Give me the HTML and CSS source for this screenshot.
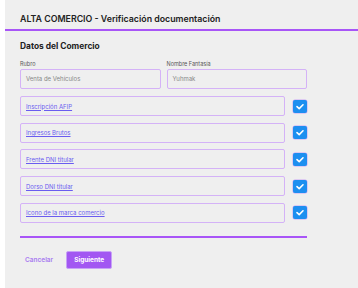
FILE: index.html
```html
<!DOCTYPE html>
<html lang="es">
<head>
<meta charset="utf-8">
<link rel="stylesheet" href="styles.css">
</head>
<body>
<div class="panel">
  <div class="header">
    <h1 class="title">ALTA COMERCIO - Verificación documentación</h1>
  </div>
  <div class="content">
    <h2 class="section">Datos del Comercio</h2>
    <div class="fields">
      <div class="field">
        <label class="label">Rubro</label>
        <div class="input">Venta de Vehículos</div>
      </div>
      <div class="field">
        <label class="label">Nombre Fantasía</label>
        <div class="input">Yuhmak</div>
      </div>
    </div>
    <div class="docs">
      <div class="doc"><div class="doc-box"><a class="doc-link" href="#">Inscripción AFIP</a></div><span class="check"><svg viewBox="0 0 14 13" width="14" height="13"><path d="M4 6.6 L6.2 8.6 L10 4.8" fill="none" stroke="#fff" stroke-width="1.6" stroke-linecap="round" stroke-linejoin="round"/></svg></span></div>
      <div class="doc"><div class="doc-box"><a class="doc-link" href="#">Ingresos Brutos</a></div><span class="check"><svg viewBox="0 0 14 13" width="14" height="13"><path d="M4 6.6 L6.2 8.6 L10 4.8" fill="none" stroke="#fff" stroke-width="1.6" stroke-linecap="round" stroke-linejoin="round"/></svg></span></div>
      <div class="doc"><div class="doc-box"><a class="doc-link" href="#">Frente DNI titular</a></div><span class="check"><svg viewBox="0 0 14 13" width="14" height="13"><path d="M4 6.6 L6.2 8.6 L10 4.8" fill="none" stroke="#fff" stroke-width="1.6" stroke-linecap="round" stroke-linejoin="round"/></svg></span></div>
      <div class="doc"><div class="doc-box"><a class="doc-link" href="#">Dorso DNI titular</a></div><span class="check"><svg viewBox="0 0 14 13" width="14" height="13"><path d="M4 6.6 L6.2 8.6 L10 4.8" fill="none" stroke="#fff" stroke-width="1.6" stroke-linecap="round" stroke-linejoin="round"/></svg></span></div>
      <div class="doc"><div class="doc-box"><a class="doc-link" href="#">Icono de la marca comercio</a></div><span class="check"><svg viewBox="0 0 14 13" width="14" height="13"><path d="M4 6.6 L6.2 8.6 L10 4.8" fill="none" stroke="#fff" stroke-width="1.6" stroke-linecap="round" stroke-linejoin="round"/></svg></span></div>
    </div>
    <div class="divider"></div>
    <div class="actions">
      <button class="btn-cancel">Cancelar</button>
      <button class="btn-next">Siguiente</button>
    </div>
  </div>
</div>
</body>
</html>
```
FILE: styles.css
```css
* { box-sizing: border-box; }
html, body { margin: 0; padding: 0; background: #ffffff; }
body { font-family: Inter, "Liberation Sans", sans-serif; color: #1f1f1f; }
.panel {
  margin-left: 5px;
  height: 288px;
  background: #efefef;
  overflow: hidden;
}
.header {
  padding: 12px 0 0 15px;
  border-bottom: 2px solid #a855f7;
  height: 31px;
}
.title {
  margin: 0;
  font-size: 8.8px;
  line-height: 13px;
  font-weight: 600;
  color: #222;
}
.content {
  padding: 0 0 0 15px;
  width: 302px;
}
.section {
  margin: 9px 0 0 0;
  font-size: 8.4px;
  line-height: 12px;
  font-weight: 700;
  color: #222;
}
.fields {
  display: flex;
  gap: 6px;
  margin-top: 8px;
}
.field { flex: 1; display: flex; flex-direction: column; }
.label {
  font-size: 5.5px;
  line-height: 8px;
  color: #555;
  margin-bottom: 1px;
}
.input {
  height: 20px;
  border: 1px solid #d4b2f7;
  border-radius: 2px;
  padding: 0 5px;
  font-size: 6px;
  line-height: 18px;
  color: #888;
}
.docs {
  display: flex;
  flex-direction: column;
  gap: 6.7px;
  margin-top: 7px;
}
.doc {
  display: flex;
  align-items: center;
  gap: 8px;
}
.doc-box {
  width: 265px;
  height: 20px;
  border: 1px solid #d4b2f7;
  border-radius: 2px;
  padding: 0 5px;
  display: flex;
  align-items: center;
}
.doc-link {
  font-size: 6px;
  color: #6a5cf0;
  text-decoration: underline;
}
.check {
  width: 14px;
  height: 13px;
  background: #1d8ff0;
  border-radius: 2px;
  box-shadow: 0 0 0 0.5px #c9a6f5;
  display: block;
}
.check svg { display: block; }
.divider {
  margin-top: 13px;
  height: 2px;
  background: #a855f7;
}
.actions {
  display: flex;
  align-items: center;
  gap: 13px;
  margin-top: 13px;
}
.btn-cancel {
  background: none;
  border: none;
  padding: 0 0 0 5px;
  font-family: inherit;
  font-size: 6.5px;
  font-weight: 600;
  color: #a97cf0;
}
.btn-next {
  height: 18px;
  width: 46px;
  padding: 0;
  background: #a257f2;
  border: 1px solid #c7a2f7;
  border-radius: 2px;
  font-family: inherit;
  font-size: 6.5px;
  font-weight: 700;
  color: #fff;
}
```
